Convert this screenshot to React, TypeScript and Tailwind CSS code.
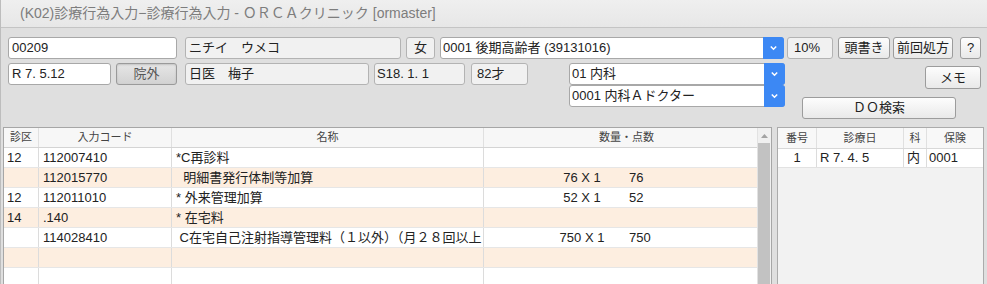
import React from "react"

const rows = [
    { kubun: "12", code: "112007410", name: "*C再診料", qty: "", pts: "" },
    { kubun: "", code: "112015770", name: "  明細書発行体制等加算", qty: "76 X 1", pts: "76" },
    { kubun: "12", code: "112011010", name: "* 外来管理加算", qty: "52 X 1", pts: "52" },
    { kubun: "14", code: ".140", name: "* 在宅料", qty: "", pts: "" },
    { kubun: "", code: "114028410", name: " C在宅自己注射指導管理料（１以外）（月２８回以上", qty: "750 X 1", pts: "750" },
    { kubun: "", code: "", name: "", qty: "", pts: "" },
    { kubun: "", code: "", name: "", qty: "", pts: "" },
]

function Chevron() {
    return (
        <svg width="9" height="6" viewBox="0 0 9 6">
            <path d="M1.8 1.4 L4.5 4.2 L7.2 1.4" fill="none" stroke="white" strokeWidth="1.5" />
        </svg>
    )
}

function Select({ children }: { children: React.ReactNode }) {
    return (
        <div className="flex h-[22px] w-full rounded-[3px] border border-[#a8a8a8] bg-white">
            <div className="flex flex-1 items-center overflow-hidden whitespace-nowrap pl-[2px]">{children}</div>
            <div className="-my-px -mr-px flex w-[21px] items-center justify-center rounded-r-[3px] bg-[#3c88f4]">
                <Chevron />
            </div>
        </div>
    )
}

function Field({ className, children }: { className: string; children: React.ReactNode }) {
    return (
        <div className={`flex h-[22px] items-center whitespace-nowrap rounded-[3px] border border-[#b3b3b3] bg-[#f1f1f1] ${className}`}>
            {children}
        </div>
    )
}

function Input({ className, children }: { className: string; children: React.ReactNode }) {
    return (
        <div className={`flex h-[22px] items-center whitespace-nowrap rounded-[3px] border border-[#a8a8a8] bg-white pl-[3px] ${className}`}>
            {children}
        </div>
    )
}

function Button({ className, children }: { className: string; children: React.ReactNode }) {
    return (
        <div
            className={`flex items-center justify-center whitespace-nowrap rounded-[3px] border border-[#9c9c9c] bg-linear-to-b from-[#fdfdfd] to-[#e9e9e9] ${className}`}
        >
            {children}
        </div>
    )
}

export default function App() {
    return (
        <div className="h-[284px] w-[987px] overflow-hidden border-l border-[#bdbdbd] bg-[#dfdfdf] font-['Liberation_Sans','Noto_Sans_CJK_JP',sans-serif] text-[13px] text-[#222]">
            {/* title */}
            <div className="flex h-[28px] items-center border-b border-[#c4c4c4] bg-linear-to-b from-[#efefef] to-[#e7e7e7] pl-[19px] text-[14px] text-[#7d7d7d]">
                (K02)診療行為入力−診療行為入力 - ＯＲＣＡクリニック [ormaster]
            </div>

            <div className="pl-[7px] pt-[9px]">
                {/* row 1 */}
                <div className="flex h-[22px]">
                    <Input className="w-[169px]">00209</Input>
                    <Field className="ml-[8px] w-[216px] pl-[3px]">ニチイ　ウメコ</Field>
                    <Field className="ml-[5px] w-[29px] justify-center">女</Field>
                    <div className="ml-[5px] w-[344px]">
                        <Select>0001 後期高齢者 (39131016)</Select>
                    </div>
                    <Field className="ml-[3px] w-[46px] pl-[6px]">10%</Field>
                    <Button className="ml-[5px] h-[22px] w-[52px]">頭書き</Button>
                    <Button className="ml-[3px] h-[22px] w-[60px]">前回処方</Button>
                    <Button className="ml-[7px] h-[22px] w-[21px]">?</Button>
                </div>

                {/* rows 2-3 */}
                <div className="mt-[4px] flex items-start">
                    <Input className="w-[103px]">R 7. 5.12</Input>
                    <div className="ml-[5px] flex h-[22px] w-[61px] items-center justify-center rounded-[3px] border border-[#9a9a9a] bg-linear-to-b from-[#e6e6e6] to-[#d2d2d2] text-[#555] shadow-[inset_0_1px_2px_rgba(0,0,0,0.15)]">
                        院外
                    </div>
                    <Field className="ml-[8px] w-[184px] pl-[3px]">日医　梅子</Field>
                    <Field className="ml-[5px] w-[91px] pl-[2px]">S18. 1. 1</Field>
                    <Field className="ml-[6px] w-[57px] pl-[5px]">82才</Field>
                    <div className="ml-[41px] flex w-[216px] flex-col">
                        <Select>01 内科</Select>
                        <Select>0001 内科Ａドクター</Select>
                    </div>
                    <div className="ml-[17px] flex w-[179px] flex-col">
                        <Button className="mt-[3px] h-[23px] w-[56px] self-end">メモ</Button>
                        <Button className="mt-[8px] h-[22px] w-[154px]">ＤＯ検索</Button>
                    </div>
                </div>
            </div>

            {/* tables */}
            <div className="mt-[8px] flex h-[170px] gap-[5px] pl-[2px]">
                <div className="flex w-[769px] border border-[#a6a6a6] bg-white">
                    <div className="flex w-[753px] flex-col">
                        <div className="flex h-[20px] shrink-0 border-b border-[#d4d4d4] bg-[#f7f7f7] text-[11px] text-[#444]">
                            <div className="flex w-[35px] items-center justify-center border-r border-[#e0e0e0]">診区</div>
                            <div className="flex w-[133px] items-center justify-center border-r border-[#e0e0e0]">入力コード</div>
                            <div className="flex w-[312px] items-center justify-center border-r border-[#e0e0e0]">名称</div>
                            <div className="flex w-[273px] items-center justify-center pl-[12px]">数量・点数</div>
                        </div>
                        {rows.map((r, i) => (
                            <div
                                key={i}
                                className={`flex h-[20px] shrink-0 border-b border-[#e6e6e6] ${i % 2 === 1 ? "bg-[#fdeee0]" : "bg-white"}`}
                            >
                                <div className="flex w-[35px] items-center border-r border-[#dcdcdc] pl-[3px]">{r.kubun}</div>
                                <div className="flex w-[133px] items-center border-r border-[#dcdcdc] pl-[4px]">{r.code}</div>
                                <div className="flex w-[312px] items-center overflow-hidden whitespace-pre border-r border-[#dcdcdc] pl-[4px]">
                                    {r.name}
                                </div>
                                <div className="flex w-[273px] items-center whitespace-nowrap">
                                    <span className="ml-[58px] w-[80px] text-center">{r.qty}</span>
                                    <span className="ml-[7px]">{r.pts}</span>
                                </div>
                            </div>
                        ))}
                    </div>
                    <div className="flex w-[14px] flex-col border-l border-[#e2e2e2] bg-[#f0f0f0] pr-[1px]">
                        <div className="flex h-[15px] shrink-0 items-center justify-center">
                            <svg width="7" height="4" viewBox="0 0 7 4">
                                <path d="M0 4 L3.5 0 L7 4 Z" fill="#a3a3a3" />
                            </svg>
                        </div>
                        <div className="flex-1 bg-[#c2c2c2]"></div>
                    </div>
                </div>

                <div className="w-[207px] border border-[#ababab] bg-[#f2f2f2]">
                    <div className="flex h-[21px] border-b border-[#d8d8d8] bg-[#f8f8f8] text-[11px] text-[#444]">
                        <div className="flex w-[39px] items-center justify-center border-r border-[#e0e0e0]">番号</div>
                        <div className="flex w-[87px] items-center justify-center border-r border-[#e0e0e0]">診療日</div>
                        <div className="flex w-[23px] items-center justify-center border-r border-[#e0e0e0]">科</div>
                        <div className="flex w-[56px] items-center justify-center">保険</div>
                    </div>
                    <div className="flex h-[19px] border-b border-[#e2e2e2] bg-white">
                        <div className="flex w-[39px] items-center justify-center border-r border-[#dcdcdc]">1</div>
                        <div className="flex w-[87px] items-center border-r border-[#dcdcdc] pl-[3px]">R 7. 4. 5</div>
                        <div className="flex w-[23px] items-center border-r border-[#dcdcdc] pl-[3px]">内</div>
                        <div className="flex w-[56px] items-center pl-[2px]">0001</div>
                    </div>
                </div>
            </div>
        </div>
    )
}
